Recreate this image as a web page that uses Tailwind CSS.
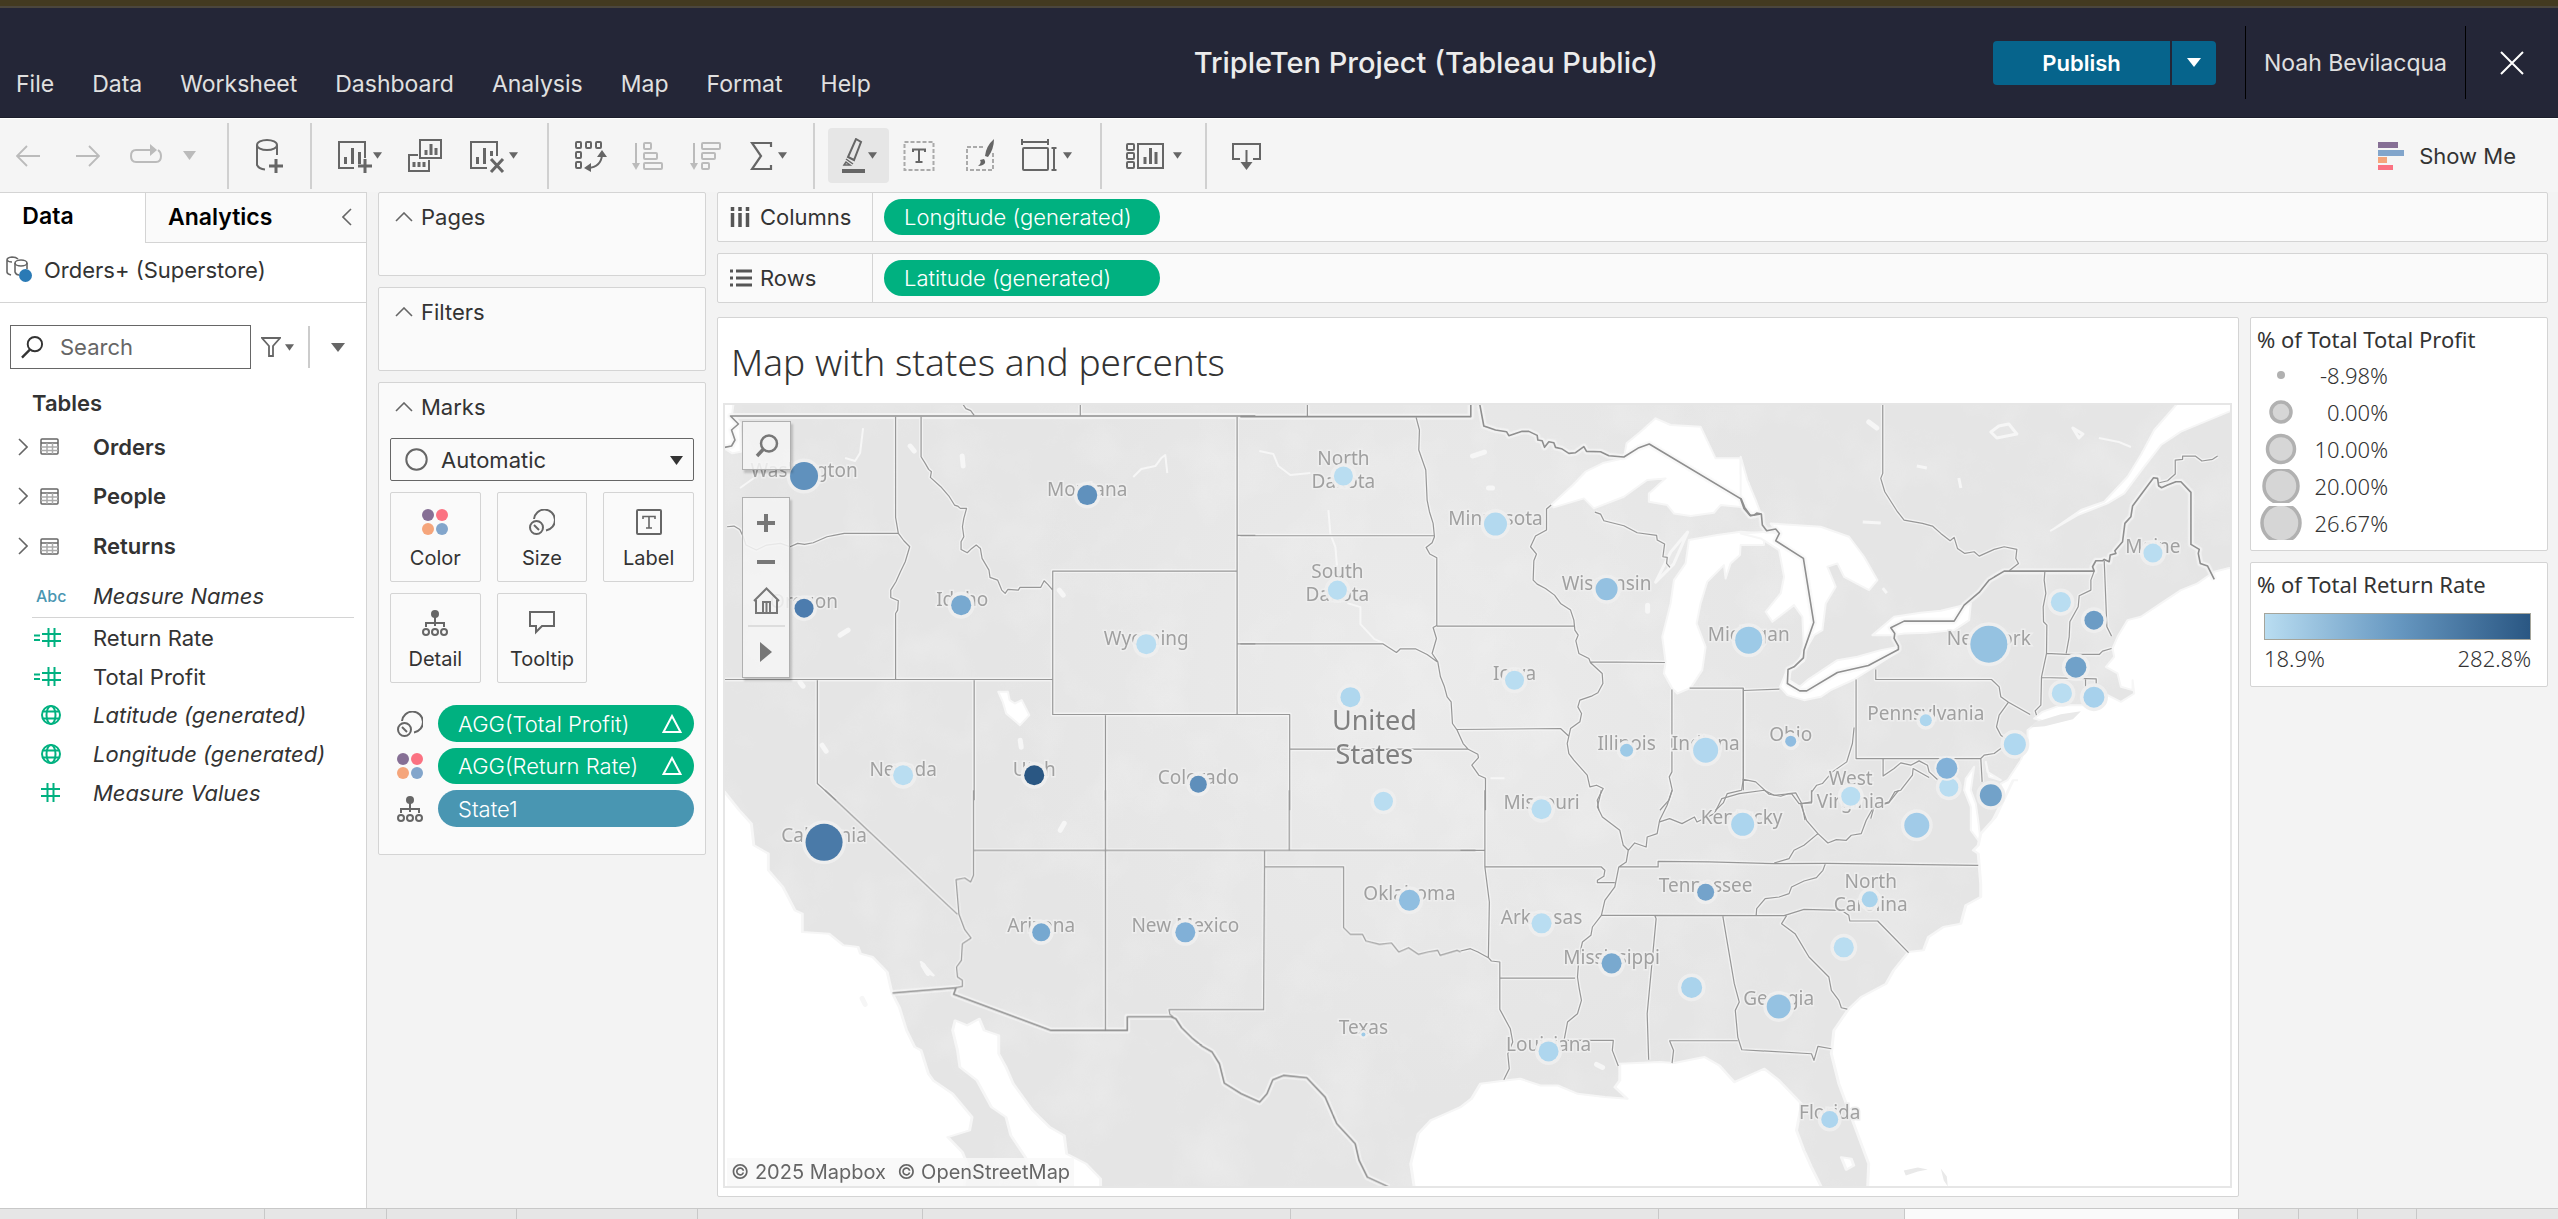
<!DOCTYPE html>
<html lang="en">
<head>
<meta charset="utf-8">
<title>TripleTen Project (Tableau Public)</title>
<script src="https://cdn.jsdelivr.net/npm/@tailwindcss/browser@4"></script>
</head>
<body class="flex h-screen flex-col overflow-hidden bg-[#f3f3f3] font-['Inter',sans-serif] text-[22px] leading-7 text-[#333]">

<!-- shared icons -->
<svg class="absolute size-0" aria-hidden="true">
  <defs>
    <g id="i-table" fill="none" stroke="#666" stroke-width="1.5"><rect x="1" y="1" width="17" height="15" rx="1"/><path d="M1 5h17"/><path d="M7 5v11M12.500 5v11M1 9h17M1 12.500h17" stroke="#aaa"/></g>
    <g id="i-hash" fill="none" stroke="#00b180" stroke-width="2"><path d="M0 6h19M0 13h19M6.500 0v19M12.500 0v19"/></g>
    <g id="i-globe" fill="none" stroke="#00b180" stroke-width="2"><circle cx="10" cy="10" r="9"/><ellipse cx="10" cy="10" rx="4.500" ry="9"/><path d="M2 6.500h16M2 13.500h16"/></g>
    <g id="i-color"><circle cx="6" cy="6" r="6" fill="#866f95"/><circle cx="20" cy="6" r="6" fill="#fb7282"/><circle cx="6" cy="20" r="6" fill="#f5a57b"/><circle cx="20" cy="20" r="6" fill="#82a5cb"/></g>
    <g id="i-size" fill="none" stroke="#666" stroke-width="2"><path d="M5 10A10.500 10.500 0 1 1 17 21.500"/><circle cx="7.500" cy="18.500" r="6.500"/><path d="M5 16l5 5"/></g>
    <g id="i-detail" fill="none" stroke="#666" stroke-width="2"><circle cx="13" cy="4" r="4" fill="#666" stroke="none"/><path d="M13 7v9M4 17v-4h18v4"/><circle cx="4" cy="22" r="3"/><circle cx="13" cy="22" r="3"/><circle cx="22" cy="22" r="3"/></g>
    <path id="i-up" d="M1 9L9 1l8 8" fill="none" stroke="#666" stroke-width="1.600"/>
    <path id="i-right" d="M1 1l8 8-8 8" fill="none" stroke="#666" stroke-width="1.600"/>
    <path id="i-caret" d="M0 0h10L5 7z"/>
  </defs>
</svg>

<div class="h-2 shrink-0 border-b-2 border-[#4b463d] bg-[#433a20]"></div>

<header class="flex h-[110px] shrink-0 items-stretch border-b border-[#1c1e2b] bg-[#242637] text-[#e0e0e0]">
  <nav class="flex items-end gap-[38px] pb-[19px] pl-4 text-[23px]">
    <a href="#">File</a><a href="#">Data</a><a href="#">Worksheet</a><a href="#">Dashboard</a><a href="#">Analysis</a><a href="#">Map</a><a href="#">Format</a><a href="#">Help</a>
  </nav>
  <h1 class="flex flex-1 items-center justify-center pr-3 text-[29px] font-medium text-[#ececec]">TripleTen Project (Tableau Public)</h1>
  <div class="flex items-center gap-0.5 pr-[29px]">
    <button class="h-11 w-[177px] rounded-l bg-[#06648c] font-semibold text-white">Publish</button>
    <button class="flex h-11 w-11 items-center justify-center rounded-r bg-[#06648c]" aria-label="Publish options"><svg class="h-[9px] w-[14px] fill-white" viewBox="0 0 10 7" preserveAspectRatio="none"><use href="#i-caret"/></svg></button>
  </div>
  <div class="my-[18px] flex w-[221px] items-center justify-center border-x border-black text-[23px]">Noah Bevilacqua</div>
  <button class="flex w-[92px] items-center justify-center" aria-label="Close"><svg class="size-6" viewBox="0 0 24 24"><path d="M1 1l22 22M23 1L1 23" stroke="#fff" stroke-width="2"/></svg></button>
</header>

<div class="flex h-[74px] shrink-0 items-center border-t border-white bg-[#f5f5f5]">
  <div class="flex h-[66px] w-[229px] items-center border-r-2 border-[#d0d0d0] pl-4">
    <button aria-label="Undo"><svg class="h-6 w-6" viewBox="0 0 24 24" fill="none" stroke="#bbb" stroke-width="1.800"><path d="M24 12H1M11 2L1 12l10 10"/></svg></button>
    <button class="ml-9" aria-label="Redo"><svg class="h-6 w-6" viewBox="0 0 24 24" fill="none" stroke="#bbb" stroke-width="1.800"><path d="M0 12h23M13 2l10 10-10 10"/></svg></button>
    <button class="ml-[30px]" aria-label="Replay"><svg class="h-6 w-8" viewBox="0 0 32 24" fill="none" stroke="#bbb" stroke-width="2"><path d="M21 6H6Q1 6 1 12t5 6h20q5 0 5-6 0-4-3-6"/><path d="M20 0l7 6-7 6z" fill="#bbb" stroke="none"/></svg></button>
    <button class="ml-[21px]" aria-label="Replay options"><svg class="h-[9px] w-[13px] fill-[#bbb]" viewBox="0 0 10 7" preserveAspectRatio="none"><use href="#i-caret"/></svg></button>
  </div>
  <div class="flex h-[66px] w-[83px] items-center justify-center border-r-2 border-[#d0d0d0]">
    <button aria-label="New data source"><svg class="h-9 w-7" viewBox="0 0 28 36" fill="none" stroke="#666" stroke-width="2"><ellipse cx="11" cy="7" rx="10" ry="5"/><path d="M1 7v20q2 4 8 4.500M21 7v10"/><path d="M20 21v14M13 28h14" stroke-width="3"/></svg></button>
  </div>
  <div class="flex h-[66px] w-[237px] items-center border-r-2 border-[#d0d0d0] pl-[25px] fill-[#666]">
    <button aria-label="New worksheet" class="flex items-center"><svg class="h-9 w-9" viewBox="0 0 36 36" fill="none" stroke="#666" stroke-width="2"><path d="M17 30H2V4h26v16"/><path d="M8.500 26v-7M15.500 26V10M22.500 26V14" stroke-width="3"/><path d="M28 21v14M21 28h14" stroke-width="3"/></svg><svg class="h-[7px] w-[9px]" viewBox="0 0 10 7"><use href="#i-caret"/></svg></button>
    <button class="ml-[25px]" aria-label="Duplicate"><svg class="h-9 w-9" viewBox="0 0 36 36" fill="none" stroke="#666" stroke-width="2"><rect x="13" y="2" width="21" height="18"/><path d="M19 17v-5M24 17V6M29 17v-7" stroke-width="3"/><path d="M11 17H2v16h20v-11"/><path d="M7 29v-5M12 29v-5M17 29v-5" stroke-width="3"/></svg></button>
    <button class="ml-[26px] flex items-center" aria-label="Clear sheet"><svg class="h-9 w-9" viewBox="0 0 36 36" fill="none" stroke="#666" stroke-width="2"><path d="M18 30H2V4h26v14"/><path d="M8.500 26v-7M15.500 26V10M22.500 18v-5" stroke-width="3"/><path d="M22 21l12 13M34 21L22 34" stroke-width="3"/></svg><svg class="ml-1 h-[7px] w-[9px]" viewBox="0 0 10 7"><use href="#i-caret"/></svg></button>
  </div>
  <div class="flex h-[66px] w-[266px] items-center border-r-2 border-[#d0d0d0] pl-6 fill-[#666]">
    <button aria-label="Swap rows and columns"><svg class="h-9 w-9" viewBox="0 0 36 36" fill="none" stroke="#666" stroke-width="2"><rect x="3" y="4" width="5" height="6" rx="1"/><rect x="13" y="4" width="5" height="6" rx="1"/><rect x="23" y="4" width="5" height="6" rx="1"/><rect x="3" y="14" width="5" height="6" rx="1"/><rect x="3" y="24" width="5" height="6" rx="1"/><path d="M29 17q-1 12-14 13"/><path d="M29 12l5 7H24zM11 30l7-5v9z" fill="#666" stroke="none"/></svg></button>
    <button class="ml-[23px]" aria-label="Sort ascending"><svg class="h-9 w-8" viewBox="0 0 32 36" fill="none" stroke="#bbb" stroke-width="2"><path d="M4 5v22"/><path d="M4 32L0 25h8z" fill="#bbb" stroke="none"/><rect x="12" y="5" width="7" height="6" rx="1"/><rect x="12" y="15" width="13" height="6" rx="1"/><rect x="12" y="25" width="18" height="6" rx="1"/></svg></button>
    <button class="ml-[26px]" aria-label="Sort descending"><svg class="h-9 w-8" viewBox="0 0 32 36" fill="none" stroke="#bbb" stroke-width="2"><path d="M4 5v22"/><path d="M4 32L0 25h8z" fill="#bbb" stroke="none"/><rect x="12" y="5" width="18" height="6" rx="1"/><rect x="12" y="15" width="13" height="6" rx="1"/><rect x="12" y="25" width="7" height="6" rx="1"/></svg></button>
    <button class="ml-7 flex items-center" aria-label="Totals"><svg class="h-9 w-6" viewBox="0 0 24 36" fill="none" stroke="#666" stroke-width="2.200"><path d="M21 9V5H2l9 13L2 31h19v-4"/></svg><svg class="ml-1 h-[7px] w-[9px]" viewBox="0 0 10 7"><use href="#i-caret"/></svg></button>
  </div>
  <div class="flex h-[66px] w-[287px] items-center border-r-2 border-[#d0d0d0] pl-[13px] fill-[#666]">
    <button class="flex h-[55px] w-[61px] items-center justify-center rounded-sm bg-[#e6e6e6]" aria-label="Highlight"><svg class="h-9 w-7" viewBox="0 0 28 36" fill="none" stroke="#666" stroke-width="2"><path d="M16 1l5 3-7 18-6-3z"/><path d="M6 21l7 5M4 27l2-3 4 3z" stroke-width="1.500"/><path d="M2 33h23" stroke-width="4"/></svg><svg class="h-[7px] w-[9px]" viewBox="0 0 10 7"><use href="#i-caret"/></svg></button>
    <button class="ml-[14px]" aria-label="Show mark labels"><svg class="h-8 w-8" viewBox="0 0 32 32" fill="none" stroke="#666" stroke-width="2"><rect x="1.500" y="2" width="29" height="28" stroke="#aaa" stroke-dasharray="4 2"/><path d="M10 12V9.500h12V12M16 9.500V22M12.500 22h7"/></svg></button>
    <button class="ml-[30px]" aria-label="Format"><svg class="h-9 w-8" viewBox="0 0 32 36" fill="none" stroke="#aaa" stroke-width="2"><path d="M18 9H2v23h26V15" stroke-dasharray="4 2"/><path d="M29 1q-8 7-9 17l3 1q6-8 6-18zM19 21q4 6-6 7 4-3 2-6z" fill="#666" stroke="none"/></svg></button>
    <button class="ml-6 flex items-center" aria-label="Fit"><svg class="h-9 w-9" viewBox="0 0 36 36" fill="none" stroke="#666" stroke-width="2"><rect x="2" y="10" width="25" height="22" rx="1"/><path d="M1 4h26M1 1v6M27 1v6M33 10v22M30.500 10h5M30.500 32h5"/></svg><svg class="ml-1.5 h-[7px] w-[9px]" viewBox="0 0 10 7"><use href="#i-caret"/></svg></button>
  </div>
  <div class="flex h-[66px] w-[105px] items-center border-r-2 border-[#d0d0d0] pl-6 fill-[#666]">
    <button class="flex items-center" aria-label="Show cards"><svg class="h-9 w-10" viewBox="0 0 40 36" fill="none" stroke="#666" stroke-width="2"><rect x="1" y="6" width="7" height="6" rx="1"/><rect x="1" y="15" width="7" height="6" rx="1"/><rect x="1" y="24" width="7" height="6" rx="1"/><rect x="12" y="6" width="25" height="24"/><path d="M19 26v-7M24.500 26V10M30 26V14" stroke-width="3"/></svg><svg class="ml-[7px] h-[7px] w-[9px]" viewBox="0 0 10 7"><use href="#i-caret"/></svg></button>
  </div>
  <button class="ml-6" aria-label="Download"><svg class="h-8 w-8" viewBox="0 0 32 32" fill="none" stroke="#666" stroke-width="2"><path d="M9 19H2V4h27v15h-7M15.500 10v13"/><path d="M15.500 30l-6-8h12z" fill="#666" stroke="none"/></svg></button>
  <button class="mr-[42px] ml-auto flex items-center gap-[14px]"><svg class="h-[30px] w-7" viewBox="0 0 28 30"><path d="M1 1h20v6H1z" fill="#866f95"/><path d="M1 9h26v6H1z" fill="#82a5cb"/><path d="M1 16h9v6H1z" fill="#f5a57b"/><path d="M1 24h15v5H1z" fill="#fb7282"/></svg>Show Me</button>
</div>

<main class="flex min-h-0 flex-1">
  <!-- data pane -->
  <aside class="flex w-[367px] shrink-0 flex-col border-t border-r border-[#d4d4d4] bg-white">
    <div class="flex h-[50px] shrink-0 text-[23px] font-semibold text-black">
      <button class="w-[145px] pr-[49px] pb-1 text-center">Data</button>
      <button class="flex flex-1 items-center justify-between border-b border-l border-[#d4d4d4] bg-[#fafafa] pr-3.5 pb-0.5 pl-[22px]">Analytics<svg class="h-[18px] w-2.5 rotate-180" viewBox="0 0 10 18"><use href="#i-right"/></svg></button>
    </div>
    <div class="flex h-[60px] shrink-0 items-center gap-[11px] border-b border-[#d4d4d4] pb-1.5 pl-1.5">
      <svg class="h-[27px] w-[27px]" viewBox="0 0 27 27" fill="none" stroke="#666" stroke-width="1.600"><path d="M12 3Q10 1 6 1 1 1.500 1 4v12q0 2 4 3M1 4q1 2 5 2"/><ellipse cx="15" cy="7" rx="6" ry="3"/><path d="M9 7v9q1 3 4 3M21 7v6"/><circle cx="19.500" cy="19.500" r="6.500" fill="#2a7ab5" stroke="none"/></svg>
      Orders+ (Superstore)
    </div>
    <div class="mt-[22px] flex h-[44px] shrink-0 items-center pl-2.5">
      <label class="flex h-[44px] w-[241px] items-center gap-4 border border-[#666] pl-2.5"><svg class="h-6 w-[23px] shrink-0" viewBox="0 0 24 24" fill="none" stroke="#333" stroke-width="2"><circle cx="14.500" cy="9" r="7.500"/><path d="M9 15l-8 8" stroke-width="2.500"/></svg><input class="w-full min-w-0 bg-transparent text-[22px] outline-none placeholder:text-[#666]" type="text" placeholder="Search" aria-label="Search"></label>
      <button class="ml-2.5 flex items-center gap-1 fill-[#666]" aria-label="Filter fields"><svg class="h-5 w-5" viewBox="0 0 20 20" fill="none" stroke="#666" stroke-width="1.800"><path d="M1 1h18l-7 8v10H8V9z"/></svg><svg class="h-[7px] w-[9px]" viewBox="0 0 10 7"><use href="#i-caret"/></svg></button>
      <span class="ml-[14px] h-[42px] w-0.5 bg-[#ccc]"></span>
      <button class="ml-[21px]" aria-label="More"><svg class="h-[9px] w-[14px] fill-[#666]" viewBox="0 0 10 7" preserveAspectRatio="none"><use href="#i-caret"/></svg></button>
    </div>
    <h2 class="mt-5 pl-8 font-semibold">Tables</h2>
    <ul class="mt-[5px]">
      <li class="flex h-[49px] items-center pl-[18px] font-semibold"><svg class="mr-3 h-[18px] w-2.5" viewBox="0 0 10 18"><use href="#i-right"/></svg><svg class="mr-[34px] h-[17px] w-[19px]" viewBox="0 0 19 17"><use href="#i-table"/></svg>Orders</li>
      <li class="flex h-[50px] items-center pl-[18px] font-semibold"><svg class="mr-3 h-[18px] w-2.5" viewBox="0 0 10 18"><use href="#i-right"/></svg><svg class="mr-[34px] h-[17px] w-[19px]" viewBox="0 0 19 17"><use href="#i-table"/></svg>People</li>
      <li class="flex h-[50px] items-center pl-[18px] font-semibold"><svg class="mr-3 h-[18px] w-2.5" viewBox="0 0 10 18"><use href="#i-right"/></svg><svg class="mr-[34px] h-[17px] w-[19px]" viewBox="0 0 19 17"><use href="#i-table"/></svg>Returns</li>
      <li class="mr-3 ml-8 flex h-[47px] items-center border-b border-[#d4d4d4] pt-1 italic"><span class="w-[61px] pl-1 text-[16px] font-medium text-[#4996b2] not-italic">Abc</span>Measure Names</li>
      <li class="flex h-[39px] items-center pl-[34px]"><svg class="mr-8 h-[19px] w-[27px]" viewBox="0 0 27 19"><path d="M0 7.500h6M0 12h6" stroke="#00b180" stroke-width="1.800"/><use href="#i-hash" x="8"/></svg>Return Rate</li>
      <li class="flex h-[39px] items-center pl-[34px]"><svg class="mr-8 h-[19px] w-[27px]" viewBox="0 0 27 19"><path d="M0 7.500h6M0 12h6" stroke="#00b180" stroke-width="1.800"/><use href="#i-hash" x="8"/></svg>Total Profit</li>
      <li class="flex h-[38px] items-center pl-[41px] italic"><svg class="mr-8 size-5" viewBox="0 0 20 20"><use href="#i-globe"/></svg>Latitude (generated)</li>
      <li class="flex h-[39px] items-center pl-[41px] italic"><svg class="mr-8 size-5" viewBox="0 0 20 20"><use href="#i-globe"/></svg>Longitude (generated)</li>
      <li class="flex h-[39px] items-center pl-[41px] italic"><svg class="mr-[33px] size-[19px]" viewBox="0 0 19 19"><use href="#i-hash"/></svg>Measure Values</li>
    </ul>
  </aside>

  <!-- cards -->
  <div class="ml-[11px] flex w-[328px] shrink-0 flex-col gap-[11px]">
    <section class="h-[84px] rounded-xs border border-[#d4d4d4] bg-[#fafafa] pt-2.5 pl-4"><h2 class="flex items-center gap-2"><svg class="h-2.5 w-[18px]" viewBox="0 0 18 10"><use href="#i-up"/></svg>Pages</h2></section>
    <section class="h-[84px] rounded-xs border border-[#d4d4d4] bg-[#fafafa] pt-2.5 pl-4"><h2 class="flex items-center gap-2"><svg class="h-2.5 w-[18px]" viewBox="0 0 18 10"><use href="#i-up"/></svg>Filters</h2></section>
    <section class="rounded-xs border border-[#d4d4d4] bg-[#fafafa] px-[11px] pt-2.5 pb-[27px]">
      <h2 class="flex items-center gap-2 pl-[5px]"><svg class="h-2.5 w-[18px]" viewBox="0 0 18 10"><use href="#i-up"/></svg>Marks</h2>
      <div class="relative mt-[17px]">
        <select class="h-[43px] w-full appearance-none rounded-xs border border-[#666] bg-[#fafafa] pl-[50px]" aria-label="Mark type"><option>Automatic</option></select>
        <svg class="pointer-events-none absolute top-2.5 left-[15px] size-[23px]" viewBox="0 0 23 23"><circle cx="11.500" cy="11.500" r="10.200" fill="none" stroke="#666" stroke-width="2"/></svg>
        <svg class="pointer-events-none absolute top-[18px] right-[11px] h-[9px] w-[13px] fill-[#333]" viewBox="0 0 10 7" preserveAspectRatio="none"><use href="#i-caret"/></svg>
      </div>
      <div class="mt-[11px] grid grid-cols-3 gap-x-4 gap-y-[11px] text-[20px]">
        <button class="flex h-[90px] flex-col items-center gap-[9px] rounded-xs border border-[#d4d4d4] pt-4"><svg class="size-[26px]" viewBox="0 0 26 26"><use href="#i-color"/></svg>Color</button>
        <button class="flex h-[90px] flex-col items-center gap-[9px] rounded-xs border border-[#d4d4d4] pt-4"><svg class="size-[26px]" viewBox="0 0 26 26"><use href="#i-size"/></svg>Size</button>
        <button class="flex h-[90px] flex-col items-center gap-[9px] rounded-xs border border-[#d4d4d4] pt-4"><svg class="size-[26px]" viewBox="0 0 26 26" fill="none" stroke="#666" stroke-width="2"><rect x="1" y="1" width="24" height="24" rx="1"/><path d="M7 10V7.500h12V10M13 7.500V19M10 19h6" stroke-width="1.600"/></svg>Label</button>
        <button class="flex h-[90px] flex-col items-center gap-[9px] rounded-xs border border-[#d4d4d4] pt-4"><svg class="size-[26px]" viewBox="0 0 26 26"><use href="#i-detail"/></svg>Detail</button>
        <button class="flex h-[90px] flex-col items-center gap-[9px] rounded-xs border border-[#d4d4d4] pt-4"><svg class="size-[26px]" viewBox="0 0 26 26"><path d="M1 2h24v14H13l-6 6v-6H1z" fill="none" stroke="#666" stroke-width="2"/></svg>Tooltip</button>
      </div>
      <ul class="mt-[22px] flex flex-col gap-1.5 text-white">
        <li class="flex items-center gap-[15px] pl-[7px]"><svg class="size-[26px] shrink-0" viewBox="0 0 26 26"><use href="#i-size"/></svg><span class="flex h-[37px] flex-1 items-center justify-between rounded-full bg-[#00b180] pr-3 pl-5 font-light">AGG(Total Profit)<svg class="size-5" viewBox="0 0 20 20"><path d="M10 2l8.500 16h-17z" fill="none" stroke="#fff" stroke-width="2"/></svg></span></li>
        <li class="flex items-center gap-[15px] pl-[7px]"><svg class="size-[26px] shrink-0" viewBox="0 0 26 26"><use href="#i-color"/></svg><span class="flex h-[36px] flex-1 items-center justify-between rounded-full bg-[#00b180] pr-3 pl-5 font-light">AGG(Return Rate)<svg class="size-5" viewBox="0 0 20 20"><path d="M10 2l8.500 16h-17z" fill="none" stroke="#fff" stroke-width="2"/></svg></span></li>
        <li class="flex items-center gap-[15px] pl-[7px]"><svg class="size-[26px] shrink-0" viewBox="0 0 26 26"><use href="#i-detail"/></svg><span class="flex h-[37px] flex-1 items-center rounded-full bg-[#4996b2] pl-5 font-light">State1</span></li>
      </ul>
    </section>
  </div>

  <!-- shelves and view -->
  <div class="mr-2.5 ml-[11px] flex min-w-0 flex-1 flex-col pb-[11px]">
    <div class="flex h-[50px] shrink-0 rounded-xs border border-[#d4d4d4] bg-[#fafafa]">
      <div class="flex w-[155px] items-center gap-2.5 border-r border-[#d4d4d4] pl-3"><svg class="h-5 w-5" viewBox="0 0 20 20" stroke="#555" stroke-width="4"><path d="M2.500 0v4M10 0v4M17.500 0v4M2.500 6v14M10 6v14M17.500 6v14" stroke-width="3.500"/></svg>Columns</div>
      <span class="my-auto ml-[11px] flex h-9 w-[276px] items-center rounded-full bg-[#00b180] pl-5 font-light text-white">Longitude (generated)</span>
    </div>
    <div class="mt-[11px] flex h-[50px] shrink-0 rounded-xs border border-[#d4d4d4] bg-[#fafafa]">
      <div class="flex w-[155px] items-center gap-2 border-r border-[#d4d4d4] pl-3"><svg class="h-[18px] w-[22px]" viewBox="0 0 22 18" stroke="#555" stroke-width="3"><path d="M0 2h3M0 9h3M0 16h3M6 2h16M6 9h16M6 16h16"/></svg>Rows</div>
      <span class="my-auto ml-[11px] flex h-9 w-[276px] items-center rounded-full bg-[#00b180] pl-5 font-light text-white">Latitude (generated)</span>
    </div>

    <div class="mt-[14px] flex min-h-0 flex-1 gap-[11px]">
      <section class="flex min-w-0 flex-1 flex-col rounded-xs border border-[#d4d4d4] bg-white pr-1.5 pb-2 pl-[5px]">
        <h2 class="flex h-[85px] shrink-0 items-center pt-0.5 pl-2 font-['Noto_Sans','Open_Sans',sans-serif] text-[37px] font-light">Map with states and percents</h2>
        <div class="relative min-h-0 flex-1 border-2 border-[#e6e6e6]">
          <svg class="block h-full w-full" viewBox="725 405 1504 781" preserveAspectRatio="xMinYMin slice" role="img" aria-label="Map of the United States with profit and return rate marks">
            <defs>
              <path id="nw-thick" class="[vector-effect:non-scaling-stroke]" transform="translate(715 380) scale(.3444 .3333)" d="M28 202L48 198L58 180L48 150L68 132L45 108H1568"/>
              <path id="nw" class="[vector-effect:non-scaling-stroke]" transform="translate(715 380) scale(.3444 .3333)" d="M720 74L728 86L742 92L752 106M1060 74V107M524 110V412L532 460L548 482L565 500L552 545L538 575L525 605L510 630V652L532 662L530 690L524 700V898M35 440L55 438L72 448L82 470L90 495L120 510L150 495L190 490L218 500L240 490L260 493L285 488L325 470L345 466L375 460H532M598 110V230L610 250L620 268L628 275L625 292L655 320L680 350L695 375L704 378L712 385L730 385L722 415L718 440L722 470L714 485V508L732 518L745 505L758 495L770 505L775 535L795 570L798 592L820 600L832 630L842 640L850 628L880 630L885 622L945 622L955 602L965 612L980 630M1568 1003H980V573H1515M1515 110V1003M1515 466H1568M1515 791H1568M28 898H980M297 900V1210L351 1260M752 900V1260M1133 1005V1260"/>
              <path id="nc-thick" class="[vector-effect:non-scaling-stroke]" transform="translate(1240 390) scale(.3333)" d="M0 80H691V44M718 44L730 108L765 120L798 125L805 137L845 124L865 124L890 136L892 150L905 152L912 172L925 155L940 158L945 172L963 176L985 190L1005 188L1030 170L1038 184L1080 185L1105 197L1150 201L1195 173L1226 162L1502 327L1512 352L1530 377L1560 372"/>
              <path id="nc" class="[vector-effect:non-scaling-stroke]" transform="translate(1240 390) scale(.3333)" d="M201 44V78M527 82L537 120L535 180L556 240L560 330L567 365L578 400L582 440L575 458L557 472L568 492L589 503V706M0 437H582M0 761H427L468 787L480 776L525 776L560 793L590 815M589 706L578 712L588 745L575 790L592 815L600 860L612 890L620 920L632 935L636 1000L650 1020L668 1060L683 1077L712 1092L714 1102L694 1125L715 1155L735 1164V1260M589 708H1000M932 345L918 357V420L885 438L870 470L888 492L880 512L878 570L890 582L915 595L942 615L960 640L990 660L1000 690L1003 720L1013 735L1006 752L1015 790L1045 805L1050 818L1085 850L1087 880L1072 908L1055 917L1018 930L1012 950L1023 970L1018 995L990 1015L985 1038L980 1060L985 1090L1000 1110L1040 1155L1048 1190L1068 1185L1088 1195L1070 1230L1075 1260M1063 366L1080 372L1090 392L1150 407L1190 428L1248 436L1250 450L1272 462L1267 500L1280 502L1278 520L1288 532M1050 815L1273 817M650 1018L960 1015L985 1038M1294 898V1145L1286 1160L1295 1200L1285 1230L1258 1260M1347 894H1508V1165M1508 1167L1503 1200L1460 1210L1448 1238L1425 1260M0 973H148V1260M148 1077H683"/>
              <path id="ne-thick" class="[vector-effect:non-scaling-stroke]" transform="translate(1740 390) scale(.3333)" d="M0 327L10 355L28 376L40 375L48 369L62 372L65 405L78 422L105 417L116 430L105 452L188 505L219 697L190 780L188 803L160 830L142 838L140 880L177 902H198L290 847L383 826L473 778V768L460 745L462 730L450 713L490 693H640L670 645L715 607L745 570L790 543H1060L1055 530L1065 512H1085L1090 508L1105 515L1108 495L1125 490L1122 482L1145 455L1152 400L1170 380L1175 348L1238 263L1250 265L1253 287L1262 293L1280 285L1305 275H1320L1350 307V463L1375 478L1372 490L1378 520L1400 528L1420 568"/>
              <path id="ne" class="[vector-effect:non-scaling-stroke]" transform="translate(1740 390) scale(.3333)" d="M426 44V250L420 265L432 305L470 365L490 390L545 400L575 408L600 430L628 452L640 442L650 475L672 490L700 485L715 498L760 478L790 470L828 478L825 505L833 520L805 542M1255 278L1280 272L1303 252V210L1325 208V198H1363L1383 213L1415 208L1430 198M912 545L910 570L915 610L907 650L908 695L918 705L917 790L902 860L900 945L883 962L887 975M1060 543L1050 570V600L1015 617L1012 650L987 695L985 740L976 790M1090 512L1098 710L1112 738M917 790L975 793H1075L1085 783L1112 775M902 862L1066 866V880M1034 868V890M405 838V868H752L775 890L780 920L803 936L868 973M803 936L775 975L767 1010L780 1035L800 1050M346 868V1105H720L730 1095L760 1090L780 1075M720 1105L724 1175M427 1107V1157L460 1135L480 1118L510 1125L535 1112L560 1125L565 1145L590 1168M340 1012L335 1060L318 1115L275 1145L245 1180L228 1185L213 1205V1235L183 1240L165 1208L145 1210L120 1218L85 1212L45 1175L5 1167M183 1240L193 1290M565 1162L517 1135L515 1155L480 1200L462 1205L445 1235L400 1250L390 1285M8 895V1200M8 901L116 897"/>
              <path id="sw-thick" class="[vector-effect:non-scaling-stroke]" transform="translate(715 790) scale(.4847 .3333)" d="M366 608L497 592L492 612L693 720H850V679H940L950 685L962 712L985 745L1005 768L1025 785L1040 820L1050 878L1085 910L1123 935L1138 910L1150 868L1172 855L1220 862L1258 920L1282 1000L1320 1060L1328 1110L1345 1160L1390 1190"/>
              <path id="sw" class="[vector-effect:non-scaling-stroke]" transform="translate(715 790) scale(.4847 .3333)" d="M227 0L500 372M533 0V255L527 275L515 263L497 268L500 320L503 372L515 418L528 443L510 460L508 510L498 530L500 560L510 570V588L497 592M533 180H1568M805 0V720M1184 0V180M1133 180V230L1131 658H936L938 672L945 680M1133 230H1296V412L1310 432L1335 432L1342 452L1370 462L1395 458L1410 485L1430 472L1450 492L1470 485L1490 480L1495 495L1530 480L1537 485"/>
              <path id="se" class="[vector-effect:non-scaling-stroke]" transform="translate(1460 790) scale(.4975 .3333)" d="M0 180H49M49 0V230H283L290 240L288 258L275 270V277H310M49 230L58 335L56 502L62 512L79 515V657L100 715L105 755L95 790L98 835L87 868M56 502L35 485L20 475L0 482M79 563H230M283 0L275 50L285 80L320 120L327 165L337 180L333 215L318 230L310 290L290 330L283 375L265 410L262 435L245 455L238 500L235 560L238 590L243 630L235 670L215 695L208 750H307L305 780L317 827M283 375H390L650 376L690 357L765 360L780 375L782 392H838L900 487M318 230H397V213L500 215L630 220L735 219L1040 225M425 0L415 45L400 90L395 130L375 140L373 170L350 158L337 180M400 95L420 85L445 100L470 80L475 95L510 70L525 25L560 10L610 0L630 15L665 10L680 40L705 38V0M683 40L695 90L718 130L690 165L670 180L660 205L630 218M718 130L738 158L755 148L775 150L785 135L805 130L815 90L830 50L860 38L880 0M733 220L728 240L715 262L690 272L665 290L660 310L640 320L612 325L595 355L594 374M390 375L393 385L375 670L378 808M527 378L550 580L560 635L552 660L557 740L565 778L705 790L710 810L718 768L745 775M557 751H420L428 780L425 818M655 376L645 400L672 430L700 500L740 560L745 600L760 630L765 652L777 656"/>
              <radialGradient id="plains" gradientUnits="userSpaceOnUse" cx="1420" cy="680" r="420"><stop offset="0" stop-color="#ebebeb"/><stop offset="1" stop-color="#e5e5e5"/></radialGradient>
              <filter id="terrain" x="0" y="0" width="1" height="1"><feTurbulence type="fractalNoise" baseFrequency=".016" numOctaves="3" seed="4"/><feColorMatrix values="0 0 0 0 1  0 0 0 0 1  0 0 0 0 1  1.600 0 0 0 -.75"/></filter>
            </defs>
            <rect x="700" y="380" width="1560" height="830" fill="url(#plains)"/>
            <rect x="700" y="380" width="1560" height="830" filter="url(#terrain)" opacity=".25"/>

            <!-- oceans, gulfs and lakes -->
            <g fill="#fff" stroke="#f6f6f6" stroke-width="6" stroke-linejoin="round">
              <path transform="translate(715 380) scale(.3444 .3333)" d="M20 60H55L50 100L72 130L75 215L50 220L20 200ZM822 935L850 935L855 960L870 970L890 960L912 1005L885 1035L845 1000L835 965Z"/>
              <path transform="translate(1240 390) scale(.3333)" d="M932 345L1000 282L1035 245L1090 218L1150 205L1158 160L1200 125L1245 85L1290 105L1380 110L1425 205L1500 205V250L1525 280L1502 327L1518 352L1440 345L1420 368L1350 378L1300 370L1280 345L1225 335V310L1275 265L1220 270L1150 320L1060 355L1030 325L940 352ZM1345 450L1335 520L1300 570L1290 640L1265 740L1275 815L1270 850L1295 895L1310 910L1350 893L1385 840L1395 770L1368 700L1380 640L1400 575L1450 525L1455 565L1470 520L1498 495L1500 465H1570V430L1500 425L1430 435Z"/>
              <path transform="translate(1740 390) scale(.3333)" d="M1500 40H1310L1240 120L1200 195L1160 260L1090 335L1020 360L930 422L1010 375L1100 340L1150 310L1210 230L1260 165L1320 125L1500 50ZM0 200L20 270L45 330L60 370L28 376L0 330ZM0 430L60 445L115 480L130 560L120 610L75 665L95 695L160 645L185 680L190 780L165 830L220 735L245 720L255 640L285 590L260 530L290 520L310 560L385 600L410 570L370 500L325 440L240 410L90 400L110 430L80 425ZM140 838L190 812L150 840L145 870L177 890L200 870L290 810L350 800L420 780L475 770L470 785L400 830L340 868L270 900L240 920L190 930L140 915L118 890ZM395 735L460 680L540 668L600 662L690 640L685 690L640 720L560 728L490 730L460 735Z"/>
              <path transform="translate(1740 390) scale(.3333)" d="M1500 525L1420 545L1370 580L1320 600L1260 640L1200 680L1160 690L1130 740L1115 775L1120 800L1095 830L1130 850L1140 890L1175 900V870L1180 910L1140 935L1100 915L1090 940L1030 945L960 945L905 965L880 985L900 990L860 1020V1060L840 1110L800 1170L780 1180L785 1230L750 1300H1530V525Z"/>
              <path transform="translate(1740 390) scale(.3333)" d="M700 1130L675 1165L670 1200L690 1250V1320L720 1360L712 1290L705 1240L690 1200ZM735 1115L740 1145L780 1170L745 1160Z"/>
              <path transform="translate(715 790) scale(.4847 .3333)" d="M0 -10L20 5L50 60L75 100L80 165L110 190V240L140 290L165 360L180 370V425L235 430L265 465L295 470L300 490L325 500L355 545L365 608L380 650L395 720L412 770L425 780L440 850L450 870L490 910L530 980L525 1020L480 1040L510 1085L520 1120L510 1220H0ZM490 720L495 690L520 705L545 685L555 720L585 735V790L600 830L615 880L635 920L655 960L690 1010L720 1035L725 1090L765 1120L795 1165V1220H680L640 1100L610 1035L600 980L570 950L540 870L505 830L500 780ZM425 515L450 555L435 545Z"/>
              <path transform="translate(1460 790) scale(.4975 .3333)" d="M1110 -30L1075 80L1045 130L1040 165L1030 180L1040 190L1045 280V320L1015 345L1005 400L970 410L940 440L930 480L900 485L870 540L855 580L805 620L780 655L750 720L745 790L760 880L780 960L800 1040L820 1120L817 1220H1600V-30ZM0 950L22 925L40 880L90 870L120 865L160 885L195 885L235 910L290 920L335 925L310 890L320 870V820L400 815L430 818L490 800L520 825L550 875L610 835L640 870L685 940L675 1020L690 1080L705 1130L735 1220H-90L-100 1120L-85 1030L-60 990L-30 970ZM765 1100L785 1105L790 1125L775 1138Z"/>
              <path d="M2020 760H2260V830H2010Z" stroke="none"/>
            </g>
            <!-- Long Island and the Bahamas -->
            <g fill="#e9e9e9"><path d="M2034 722l26-8 20-3-8 8-28 7-14 1zM1903 1170l14-3 10 2-10 2-12 4zM1940 1168l6 8 1 10-4-6z"/></g>
            <!-- rivers and small lakes -->
            <g fill="none" stroke="#f6f6f6" stroke-width="2" stroke-linejoin="round">
              <path d="M1259 451l14 3 5 12 12 9 20-2M1328 510l2 24 5 13 2 24M1347 603l13 4 0 17 14 15 9 4M1133 477l8-8 14-3 6-8 4-3 2 18M845 458l10 3 5-8 3-25M740 488l14-10 2-12M2098 438l20 4 12 5M1490 778l14 0"/>
              <path d="M910 446l4 5M962 456l1 10M1059 590l4 5M800 682l3 4M822 745l4 6M840 635l8-5M1472 456l12-4M1488 488l4 0M1647 605l0 6M1020 740l1 7M1060 830l4-7M923 965l5 8M862 998l3 6M1868 422l8 6M1596 1064l6 3" stroke-width="5" stroke-linecap="round"/>
              <path d="M1990 432l8-6 10-2 8 10-20 4zM2072 428l10 6-4 4zM1862 522l18 1M1958 478l2 10M1916 466l10 2M1882 588l4 5M1655 582l15-30 17-20-14 32z" stroke-width="3"/>
            </g>

            <!-- borders with a pale casing -->
            <g fill="none" stroke="#f6f6f6" stroke-width="6" stroke-linejoin="round" opacity=".75">
              <use href="#nw-thick"/><use href="#nc-thick"/><use href="#ne-thick"/><use href="#sw-thick"/>
              <g stroke-width="4"><use href="#nw"/><use href="#nc"/><use href="#ne"/><use href="#sw"/><use href="#se"/></g>
            </g>
            <g fill="none" stroke="#979797" stroke-width="1.200" stroke-linejoin="round">
              <use href="#nw"/><use href="#nc"/><use href="#ne"/><use href="#sw"/><use href="#se"/>
              <g stroke="#8f8f8f" stroke-width="1.600"><use href="#nw-thick"/><use href="#nc-thick"/><use href="#ne-thick"/><use href="#sw-thick"/></g>
            </g>

            <g id="labels" class="font-['Noto_Sans',sans-serif] text-[19px]" fill="#a0a0a0" stroke="#eee" stroke-width="3" paint-order="stroke" text-anchor="middle">
              <text x="804" y="477">Washington</text><text x="1087" y="496">Montana</text><text x="804" y="608">Oregon</text><text x="962" y="606">Idaho</text><text x="1146" y="645">Wyoming</text><text x="903" y="776">Nevada</text><text x="1034" y="776">Utah</text><text x="1198" y="784">Colorado</text><text x="824" y="842">California</text><text x="1041" y="932">Arizona</text><text x="1185" y="932">New Mexico</text><text x="1409" y="900">Oklahoma</text><text x="1363" y="1034">Texas</text>
              <text x="1343" y="465">North</text><text x="1343" y="488">Dakota</text><text x="1337" y="578">South</text><text x="1337" y="601">Dakota</text><text x="1495" y="525">Minnesota</text><text x="1606" y="590">Wisconsin</text><text x="1748" y="641">Michigan</text><text x="1514" y="680">Iowa</text><text x="1626" y="750">Illinois</text><text x="1705" y="750">Indiana</text><text x="1541" y="809">Missouri</text>
              <text x="2152" y="553">Maine</text><text x="1988" y="645">New York</text><text x="1925" y="720">Pennsylvania</text><text x="1790" y="741">Ohio</text><text x="1850" y="785">West</text><text x="1850" y="808">Virginia</text><text x="1741" y="824">Kentucky</text><text x="1705" y="892">Tennessee</text><text x="1870" y="888">North</text><text x="1870" y="911">Carolina</text><text x="1541" y="924">Arkansas</text><text x="1611" y="964">Mississippi</text><text x="1778" y="1005">Georgia</text><text x="1548" y="1051">Louisiana</text><text x="1829" y="1119">Florida</text>
              <g class="text-[27px]" fill="#808080"><text x="1374" y="730">United</text><text x="1374" y="764">States</text></g>
            </g>

            <g stroke="#eee" stroke-opacity=".95" stroke-width="7" paint-order="stroke" fill="#b9ddf1">
              <circle cx="804" cy="476" r="14" fill="#6091bd"/><circle cx="1087" cy="495" r="10" fill="#6091bd"/><circle cx="804" cy="608" r="9.500" fill="#4c7cae"/><circle cx="961" cy="605" r="10" fill="#78a9d0"/><circle cx="1146" cy="644" r="10"/><circle cx="903" cy="775" r="10"/><circle cx="1034" cy="775" r="10" fill="#2a5783"/><circle cx="1198" cy="784" r="8.500" fill="#5f8fbb"/>
              <circle cx="824" cy="842" r="18.500" fill="#4a7aa8"/><circle cx="1041" cy="932" r="9" fill="#76a8d0"/><circle cx="1185" cy="932" r="10" fill="#81b0d7"/><circle cx="1409" cy="900" r="10.500" fill="#90bee0"/><circle cx="1363" cy="1034" r="2" fill="#9dcae7" stroke-width="5"/>
              <circle cx="1343" cy="476" r="9.500"/><circle cx="1495" cy="524" r="11.500" fill="#b3d9ef"/><circle cx="1337" cy="590" r="9.500"/><circle cx="1606" cy="589" r="11" fill="#94c1e1"/><circle cx="1748" cy="640" r="13.500" fill="#9dcae7"/><circle cx="1514" cy="680" r="9.500"/><circle cx="1350" cy="697" r="10" fill="#afd7ee"/><circle cx="1626" cy="750" r="6.500" fill="#9dcae7"/><circle cx="1705" cy="750" r="12.500" fill="#b1d7ef"/><circle cx="1383" cy="801" r="9.500"/><circle cx="1541" cy="809" r="10"/>
              <circle cx="2152" cy="553" r="9.500"/><circle cx="2060" cy="602" r="10"/><circle cx="2093" cy="620" r="9.500" fill="#6c9cc5"/><circle cx="2075" cy="667" r="10.500" fill="#70a1c9"/><circle cx="2061" cy="693" r="10"/><circle cx="2093" cy="697" r="10.500" fill="#a7d1ec"/><circle cx="1988" cy="644" r="18.500" fill="#95c2e1"/><circle cx="1925" cy="720" r="6" fill="#add6ee"/><circle cx="1790" cy="741" r="5.500" fill="#8fbce0"/><circle cx="2014" cy="744" r="11" fill="#b0d8f0"/><circle cx="1948" cy="787" r="9.500"/><circle cx="1946" cy="768" r="10.500" fill="#82b1d8" stroke-width="4"/><circle cx="1990" cy="795" r="11" fill="#72a2c9"/><circle cx="1850" cy="796" r="9.500"/>
              <circle cx="1916" cy="825" r="12.500" fill="#a1cbe8"/><circle cx="1742" cy="824" r="11.500" fill="#acd5ee"/><circle cx="1869" cy="899" r="8" fill="#a9d3ec"/><circle cx="1705" cy="892" r="8.500" fill="#74a3cb"/><circle cx="1541" cy="923" r="10"/><circle cx="1611" cy="963" r="10" fill="#79a9cf"/><circle cx="1691" cy="987" r="10.500" fill="#aad3ec"/><circle cx="1843" cy="947" r="10"/><circle cx="1778" cy="1006" r="12" fill="#95c2e2"/><circle cx="1548" cy="1051" r="10" fill="#aed6ee"/><circle cx="1829" cy="1119" r="8.500" fill="#add5ee"/>
            </g>
          </svg>

          <button class="absolute top-4 left-[17px] flex size-[49px] items-center justify-center border border-[#b0b0b0] bg-[#f4f4f4]/85 shadow-[2px_3px_2px_#0000002e]" aria-label="Search map"><svg class="size-6" viewBox="0 0 24 24" fill="none" stroke="#777" stroke-width="2.500"><circle cx="14" cy="9.500" r="8"/><path d="M8.500 15L2 22" stroke-width="3.500"/></svg></button>
          <div class="absolute top-[92px] left-[17px] flex h-[181px] w-[48px] flex-col items-center border border-[#b0b0b0] bg-[#f4f4f4]/85 pt-[5px] shadow-[2px_3px_2px_#0000002e]">
            <button class="flex h-[39px] items-center" aria-label="Zoom in"><svg class="size-5" viewBox="0 0 20 20"><path d="M1 10h18M10 1v18" stroke="#777" stroke-width="4"/></svg></button>
            <button class="flex h-[39px] items-center" aria-label="Zoom out"><svg class="size-5" viewBox="0 0 20 20"><path d="M1 10h18" stroke="#777" stroke-width="4"/></svg></button>
            <button class="flex h-[39px] items-center" aria-label="Reset view"><svg class="size-[27px]" viewBox="0 0 27 27" fill="none" stroke="#777" stroke-width="2"><path d="M1 14L13.500 1.500 26 14M3 13v13h21V13M10 26V15h7v11M13.500 15v11"/></svg></button>
            <span class="mt-[5px] h-0.5 w-[37px] bg-[#ddd]"></span>
            <button class="flex flex-1 items-center" aria-label="Map tools"><svg class="h-5 w-3.5" viewBox="0 0 14 20"><path d="M1 0l12 10L1 20z" fill="#777"/></svg></button>
          </div>
          <p class="absolute bottom-0 left-0.5 bg-[#f8f8f8]/85 px-1 text-[20px] whitespace-pre text-[#666]">© 2025 Mapbox  © OpenStreetMap</p>
        </div>
      </section>

      <aside class="flex w-[298px] shrink-0 flex-col gap-[11px] font-['Noto_Sans','Open_Sans',sans-serif] text-[22px]">
        <section class="h-[234px] rounded-xs border border-[#d4d4d4] bg-white px-1.5 pt-[7px]">
          <h3 class="whitespace-nowrap">% of Total Total Profit</h3>
          <ul class="mt-[3px] w-[131px] font-light">
            <li class="flex h-[37px] items-center justify-between"><svg class="h-[34px] w-12" viewBox="-24 -17 48 34"><circle r="4" fill="#b1b1b1"/></svg>-8.98%</li>
            <li class="flex h-[37px] items-center justify-between"><svg class="h-[34px] w-12" viewBox="-24 -17 48 34"><circle r="10" fill="#d6d6d6" stroke="#b1b1b1" stroke-width="3.500"/></svg>0.00%</li>
            <li class="flex h-[37px] items-center justify-between"><svg class="h-[34px] w-12" viewBox="-24 -17 48 34"><circle r="13.500" fill="#d6d6d6" stroke="#b1b1b1" stroke-width="3.500"/></svg>10.00%</li>
            <li class="flex h-[37px] items-center justify-between"><svg class="h-[34px] w-12" viewBox="-24 -17 48 34"><circle r="17" fill="#d6d6d6" stroke="#b1b1b1" stroke-width="3.500"/></svg>20.00%</li>
            <li class="flex h-[37px] items-center justify-between"><svg class="h-[34px] w-12" viewBox="-24 -17 48 34"><circle r="19" fill="#d6d6d6" stroke="#b1b1b1" stroke-width="3.500"/></svg>26.67%</li>
          </ul>
        </section>
        <section class="h-[125px] rounded-xs border border-[#d4d4d4] bg-white px-1.5 pt-[7px]">
          <h3 class="whitespace-nowrap">% of Total Return Rate</h3>
          <div class="mt-[15px] mr-2.5 ml-[7px] h-[27px] border border-[#a5a59b] bg-linear-to-r from-[#b9ddf1] via-[#6798c1] to-[#2a5783]"></div>
          <div class="mt-1 mr-2.5 ml-[7px] flex justify-between font-light"><span>18.9%</span><span>282.8%</span></div>
        </section>
      </aside>
    </div>
  </div>
</main>

<!-- sheet tabs -->
<footer class="flex h-[11px] shrink-0 border-t border-[#c8c8c8] bg-[#e6e6e6]">
  <span class="w-[265px] border-r border-[#c8c8c8]"></span><span class="w-[122px] border-r border-[#c8c8c8]"></span><span class="w-[130px] border-r border-[#c8c8c8]"></span><span class="w-[181px] border-r border-[#c8c8c8]"></span><span class="w-[225px] border-r border-[#c8c8c8]"></span><span class="w-[368px] border-r border-[#c8c8c8]"></span><span class="w-[368px] border-r border-[#c8c8c8]"></span><span class="w-[246px] border-r border-[#c8c8c8]"></span><span class="w-[334px] border-r border-[#c8c8c8] bg-[#fafafa]"></span><span class="w-[60px] border-r border-[#c8c8c8]"></span><span class="w-[59px] border-r border-[#c8c8c8]"></span><span class="w-[59px] border-r border-[#c8c8c8]"></span>
</footer>
</body>
</html>
